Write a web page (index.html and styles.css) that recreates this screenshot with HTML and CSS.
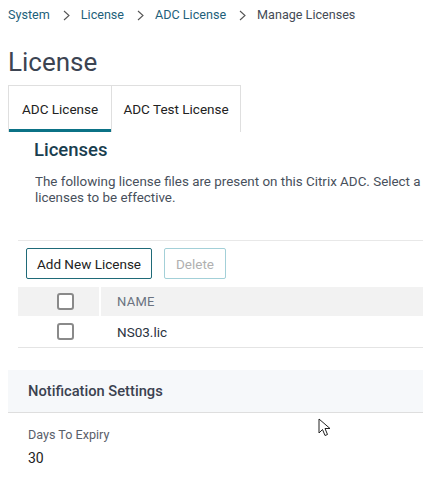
FILE: index.html
```html
<!DOCTYPE html>
<html>
<head>
<meta charset="utf-8">
<link rel="stylesheet" href="styles.css">
</head>
<body>
<div class="page">
  <nav class="crumbs">
    <a class="crumb">System</a><svg class="sep" width="7" height="11" viewBox="0 0 7 11"><path d="M1 1 L6 5.5 L1 10" fill="none" stroke="#555" stroke-width="1.1"/></svg>
    <a class="crumb">License</a><svg class="sep" width="7" height="11" viewBox="0 0 7 11"><path d="M1 1 L6 5.5 L1 10" fill="none" stroke="#555" stroke-width="1.1"/></svg>
    <a class="crumb">ADC License</a><svg class="sep" width="7" height="11" viewBox="0 0 7 11"><path d="M1 1 L6 5.5 L1 10" fill="none" stroke="#555" stroke-width="1.1"/></svg>
    <span class="crumb current">Manage Licenses</span>
  </nav>
  <h1 class="title">License</h1>
  <div class="tabs">
    <div class="tab active">ADC License</div>
    <div class="tab">ADC Test License</div>
  </div>
  <section class="licenses">
    <h2 class="section-title">Licenses</h2>
    <p class="desc">The following license files are present on this Citrix ADC. Select a license file and reboot for the new<br>licenses to be effective.</p>
  </section>
  <div class="table-wrap">
    <div class="toolbar">
      <button class="btn">Add New License</button>
      <button class="btn disabled">Delete</button>
    </div>
    <div class="row head">
      <div class="cell check"><span class="box"></span></div>
      <div class="cell name">NAME</div>
    </div>
    <div class="row">
      <div class="cell check"><span class="box"></span></div>
      <div class="cell name">NS03.lic</div>
    </div>
  </div>
  <div class="panel">
    <div class="panel-head">Notification Settings</div>
    <div class="panel-body">
      <div class="label">Days To Expiry</div>
      <div class="value">30</div>
    </div>
    <svg class="cursor" width="16" height="20" viewBox="0 0 16 20"><path d="M1 1 L1 15 L4.5 11.5 L7 17.5 L9.5 16.5 L7 10.5 L12 10.5 Z" fill="#fff" stroke="#222" stroke-width="1" stroke-linejoin="round"/></svg>
  </div>
</div>
</body>
</html>
```
FILE: styles.css
```css
html, body { margin: 0; padding: 0; background: #fff; }
body { font-family: Roboto, "Liberation Sans", sans-serif; color: #333; overflow: hidden; width: 423px; height: 493px; }
.page { padding: 0 0 0 8px; }
.crumbs { height: 29px; display: flex; align-items: center; font-size: 12.6px; white-space: nowrap; }
.crumb { color: #1d5f7a; }
.crumb.current { color: #444b55; }
.sep { margin: 1px 11px 0 13px; flex: none; }
.title { margin: 17px 0 0; font-size: 26px; font-weight: 400; color: #3c4452; line-height: 32px; height: 39px; }
.tabs { display: flex; width: 233px; border: 1px solid #dfdfdf; border-bottom: none; height: 47px; box-sizing: border-box; }
.tab { font-size: 13.5px; color: #222; display: flex; align-items: center; box-sizing: border-box; height: 46px; white-space: nowrap; }
.tab.active { width: 103px; justify-content: center; border-bottom: 3px solid #0b7286; padding-top: 3px; }
.tab:not(.active) { border-left: 1px solid #dfdfdf; width: 130px; justify-content: center; }
.licenses { padding-left: 26px; }
.section-title { margin: 6px 0 0; font-size: 18.5px; font-weight: 500; color: #193e4f; line-height: 24px; }
.desc { margin: 12px 0 0 1px; font-size: 13.4px; line-height: 16px; color: #48505c; white-space: nowrap; width: 388px; overflow: hidden; }
.table-wrap { margin: 34px 0 0 10px; border-top: 1px solid #e8e8e8; }
.toolbar { display: flex; gap: 12px; padding: 7px 0 8px 8px; }
.btn { font-family: inherit; font-size: 13.5px; height: 31px; background: #fff; border: 1px solid #1f6a78; border-radius: 2px; color: #222; padding: 0; }
.btn:first-child { width: 126px; }
.btn.disabled { border-color: #a3d0d8; color: #b0b0b0; width: 62px; }
.row { display: flex; height: 31px; border-bottom: 1px solid #e4e4e4; }
.row.head { height: 29px; border-bottom: none; }
.row.head .cell { background: #f2f2f2; }
.cell { display: flex; align-items: center; }
.check { width: 81px; justify-content: center; margin-right: 2px; padding-left: 14px; box-sizing: border-box; }
.name { flex: 1; padding-left: 16px; font-size: 13.5px; color: #2b3340; }
.row.head .name { color: #6a7280; letter-spacing: 0.3px; font-size: 13px; }
.box { width: 13px; height: 13px; border: 2px solid #8a8a8a; border-radius: 3px; background: #fff; box-sizing: content-box; }
.panel { position: relative; margin-top: 22px; }
.panel-head { height: 42px; background: #f6f8fa; border-bottom: 1px solid #dedede; display: flex; align-items: center; padding-left: 20px; font-size: 14.7px; font-weight: 500; color: #3b4250; }
.panel-body { padding: 14px 0 0 20px; }
.label { font-size: 12.6px; color: #5a606a; line-height: 16px; }
.value { font-size: 14px; color: #222; margin-top: 7px; line-height: 16px; }
.cursor { position: absolute; left: 310px; top: 48px; }
```
